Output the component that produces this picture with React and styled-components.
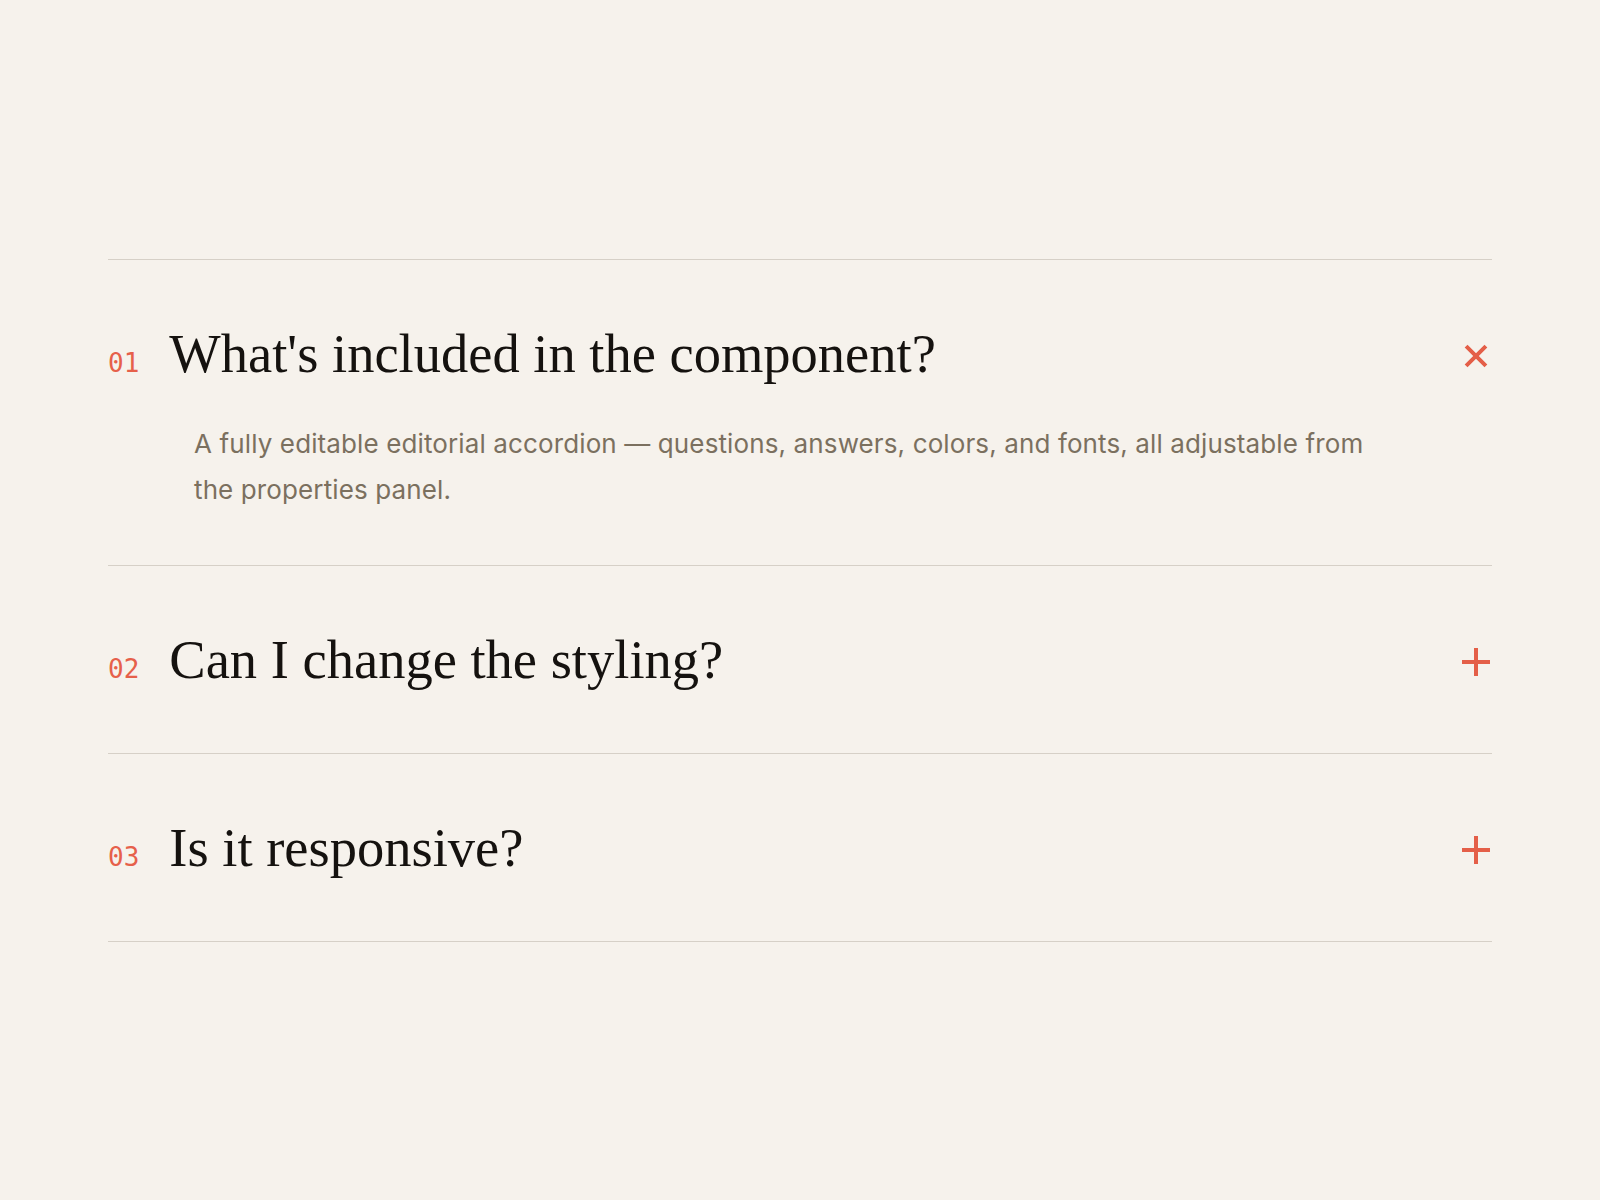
import React, { useState } from "react";
import styled, { createGlobalStyle } from "styled-components";

const faqs = [
  {
    question: "What's included in the component?",
    answer:
      "A fully editable editorial accordion — questions, answers, colors, and fonts, all adjustable from the properties panel.",
  },
  {
    question: "Can I change the styling?",
    answer:
      "Yes. Every color, font and spacing value is exposed, so the accordion can follow your own brand.",
  },
  {
    question: "Is it responsive?",
    answer:
      "It scales down cleanly to tablet and mobile widths, keeping the numbering and toggle aligned.",
  },
];

const GlobalStyle = createGlobalStyle`
  * {
    box-sizing: border-box;
  }
  body {
    margin: 0;
    background: #f6f2ec;
    font-family: "Liberation Serif", serif;
  }
`;

const Page = styled.main`
  min-height: 100vh;
  display: flex;
  align-items: center;
  justify-content: center;
`;

const List = styled.section`
  width: 1384px;
  border-bottom: 1px solid #d6d0c7;
`;

const Item = styled.div`
  border-top: 1px solid #d6d0c7;
`;

const Header = styled.button`
  width: 100%;
  display: flex;
  align-items: baseline;
  gap: 30px;
  padding: 56px 0 56px;
  margin: 0;
  border: 0;
  background: none;
  text-align: left;
  cursor: pointer;
`;

const Num = styled.span`
  flex: none;
  font-family: "DejaVu Sans Mono", "Liberation Mono", monospace;
  font-size: 26px;
  color: #e6604a;
  font-variant-numeric: slashed-zero;
`;

const Question = styled.span`
  flex: 1;
  font-family: "Liberation Serif", serif;
  font-size: 54.5px;
  line-height: 75px;
  font-weight: 400;
  color: #15120f;
`;

const Toggle = styled.span`
  flex: none;
  align-self: center;
  width: 32px;
  height: 32px;
  margin-top: 6px;
  display: flex;
  align-items: center;
  justify-content: center;
  color: #e45f48;
  transform: rotate(${(p) => (p.$open ? "45deg" : "0deg")});
  transition: transform 0.25s ease;
`;

const Answer = styled.p`
  margin: -26px 0 0;
  padding: 0 0 52px 86px;
  max-width: 1290px;
  font-family: Inter, "Noto Sans", sans-serif;
  font-size: 26px;
  line-height: 46px;
  letter-spacing: 0.12px;
  color: #7b705f;
`;

const PlusIcon = () => (
  <svg width="32" height="32" viewBox="0 0 32 32" fill="none">
    <path d="M16 2v28M2 16h28" stroke="currentColor" strokeWidth="4" />
  </svg>
);

export default function App() {
  const [open, setOpen] = useState(0);

  return (
    <>
      <GlobalStyle />
      <Page>
        <List>
          {faqs.map((faq, i) => (
            <Item key={faq.question}>
              <Header onClick={() => setOpen(open === i ? -1 : i)}>
                <Num>{String(i + 1).padStart(2, "0")}</Num>
                <Question>{faq.question}</Question>
                <Toggle $open={open === i}>
                  <PlusIcon />
                </Toggle>
              </Header>
              {open === i && <Answer>{faq.answer}</Answer>}
            </Item>
          ))}
        </List>
      </Page>
    </>
  );
}
